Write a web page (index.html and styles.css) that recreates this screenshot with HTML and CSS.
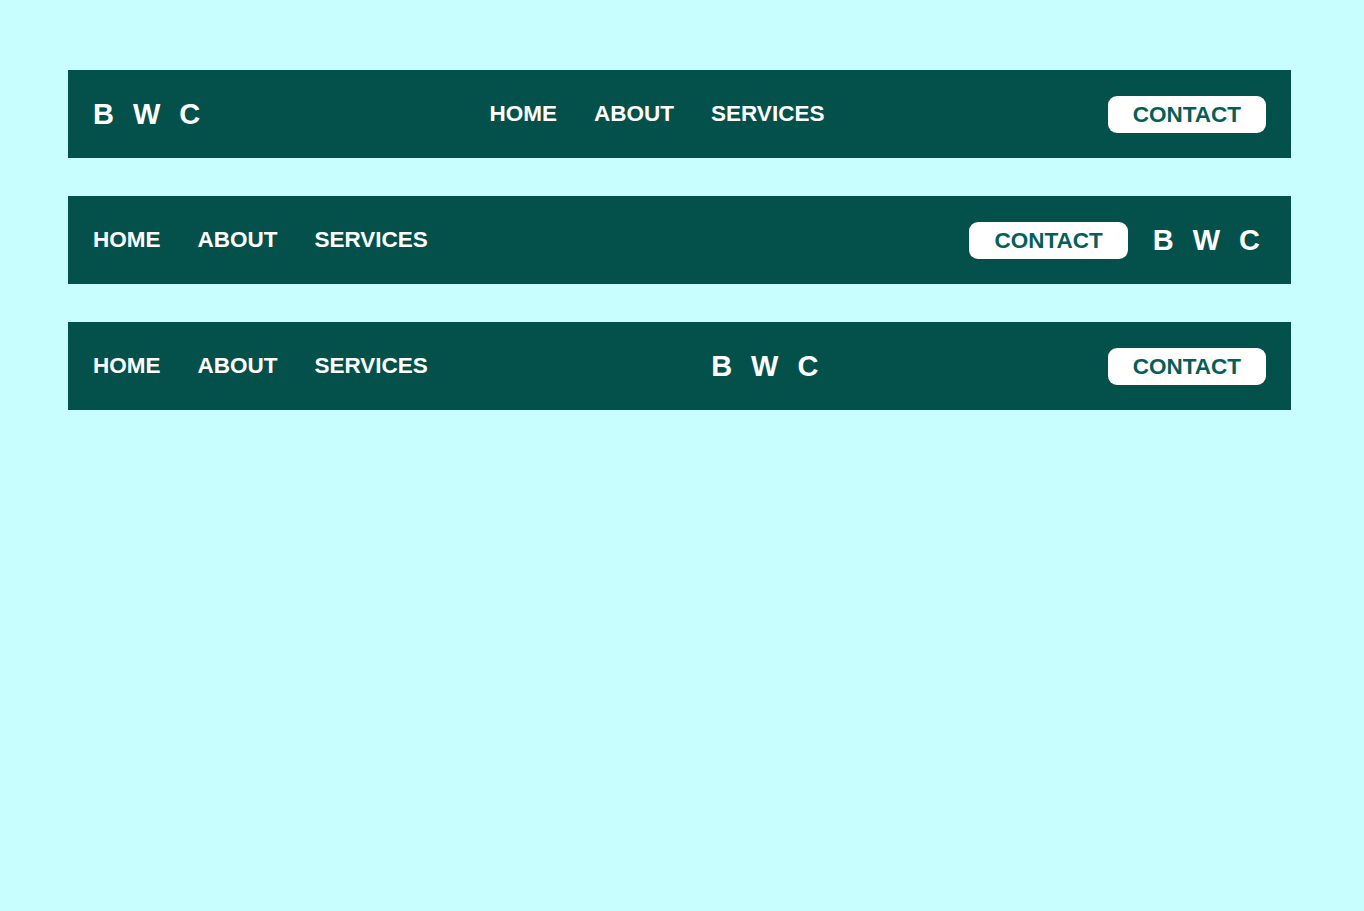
FILE: index.html
```html
<!DOCTYPE html>
<html lang="en">
<head>
<meta charset="utf-8">
<title>Navbars</title>
<link rel="stylesheet" href="styles.css">
</head>
<body>
<main class="stack">
  <nav class="bar">
    <div class="logo">BWC</div>
    <ul class="links">
      <li><a href="#">HOME</a></li>
      <li><a href="#">ABOUT</a></li>
      <li><a href="#">SERVICES</a></li>
    </ul>
    <a class="cta" href="#">CONTACT</a>
  </nav>
  <nav class="bar">
    <ul class="links">
      <li><a href="#">HOME</a></li>
      <li><a href="#">ABOUT</a></li>
      <li><a href="#">SERVICES</a></li>
    </ul>
    <div class="group">
      <a class="cta" href="#">CONTACT</a>
      <div class="logo">BWC</div>
    </div>
  </nav>
  <nav class="bar">
    <ul class="links">
      <li><a href="#">HOME</a></li>
      <li><a href="#">ABOUT</a></li>
      <li><a href="#">SERVICES</a></li>
    </ul>
    <div class="logo">BWC</div>
    <a class="cta" href="#">CONTACT</a>
  </nav>
</main>
</body>
</html>
```
FILE: styles.css
```css
* { box-sizing: border-box; }
html, body { margin: 0; padding: 0; }
body {
  background: #c8fffe;
  font-family: "Liberation Sans", Arial, sans-serif;
  min-height: 911px;
}
.stack {
  width: 1223px;
  margin: 0 0 0 68px;
  padding-top: 70px;
  display: flex;
  flex-direction: column;
  gap: 38px;
}
.bar {
  height: 88px;
  background: #03514a;
  padding: 0 25px;
  display: flex;
  align-items: center;
  justify-content: space-between;
}
.logo {
  color: #ffffff;
  font-weight: 700;
  font-size: 29px;
  letter-spacing: 19px;
  margin-right: -13px;
  line-height: 32px;
}
.links {
  list-style: none;
  margin: 0;
  padding: 0;
  display: flex;
  gap: 37px;
}
.links a {
  color: #ffffff;
  text-decoration: none;
  font-weight: 700;
  font-size: 22.5px;
  line-height: 26px;
}
.cta {
  display: block;
  background: #ffffff;
  color: #035f59;
  text-decoration: none;
  font-weight: 700;
  font-size: 22.5px;
  line-height: 25px;
  padding: 6px 25px;
  border-radius: 9px;
}
.group {
  display: flex;
  align-items: center;
  gap: 25px;
}
```
